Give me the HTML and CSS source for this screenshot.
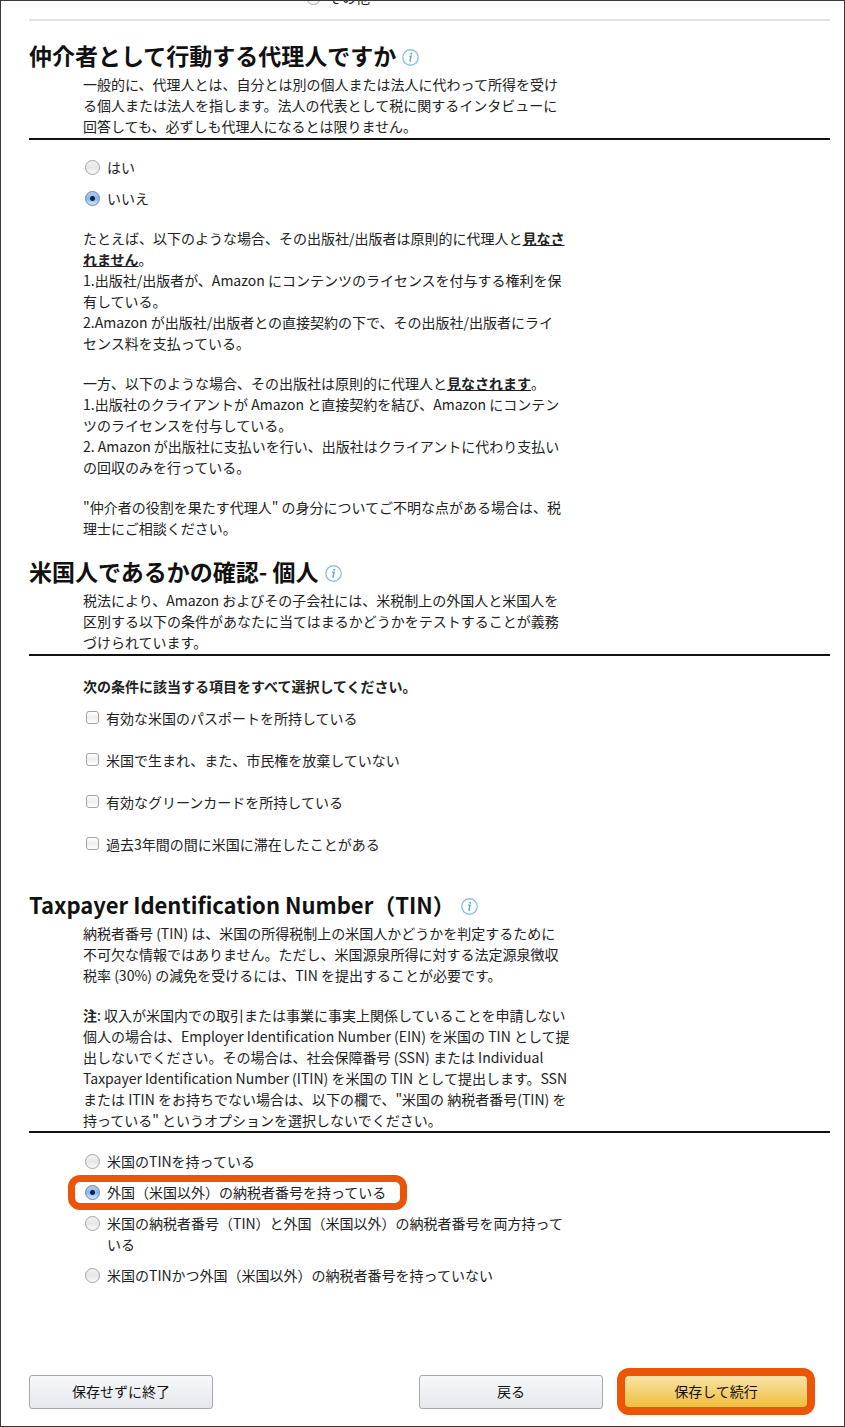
FILE: index.html
```
<!DOCTYPE html>
<html lang="ja">
<head>
<meta charset="utf-8">
<meta name="viewport" content="width=device-width, initial-scale=1">
<title>税に関するインタビュー</title>
<link rel="stylesheet" href="styles.css">
</head>
<body>
<form class="page">
  <div class="previous">
    <label class="option"><input class="radio" type="radio" name="entity"><span>その他</span></label>
  </div>

  <section class="section">
    <h2 class="title">仲介者として行動する代理人ですか
      <svg class="info" viewBox="0 0 17 17" aria-hidden="true"><circle cx="8.5" cy="8.5" r="7.7"/><path class="stem" d="M7.3 7.2H9L8 11.7Q7.9 12.4 9 12"/><circle class="dot" cx="9.3" cy="4.8" r="1"/></svg>
    </h2>
    <p class="lead">一般的に、代理人とは、自分とは別の個人または法人に代わって所得を受け<br>る個人または法人を指します。法人の代表として税に関するインタビューに<br>回答しても、必ずしも代理人になるとは限りません。</p>
    <div class="body">
      <div class="options">
        <label class="option"><input class="radio" type="radio" name="agent"><span>はい</span></label>
        <label class="option"><input class="radio" type="radio" name="agent" checked><span>いいえ</span></label>
      </div>
      <div class="notes">
        <p>たとえば、以下のような場合、その出版社/出版者は原則的に代理人と<strong class="key">見なさ<br>れません</strong>。<br>1.出版社/出版者が、Amazon にコンテンツのライセンスを付与する権利を保<br>有している。<br>2.Amazon が出版社/出版者との直接契約の下で、その出版社/出版者にライ<br>センス料を支払っている。</p>
        <p>一方、以下のような場合、その出版社は原則的に代理人と<strong class="key">見なされます</strong>。<br>1.出版社のクライアントが Amazon と直接契約を結び、Amazon にコンテン<br>ツのライセンスを付与している。<br>2. Amazon が出版社に支払いを行い、出版社はクライアントに代わり支払い<br>の回収のみを行っている。</p>
        <p>"仲介者の役割を果たす代理人" の身分についてご不明な点がある場合は、税<br>理士にご相談ください。</p>
      </div>
    </div>
  </section>

  <section class="section">
    <h2 class="title">米国人であるかの確認- 個人
      <svg class="info" viewBox="0 0 17 17" aria-hidden="true"><circle cx="8.5" cy="8.5" r="7.7"/><path class="stem" d="M7.3 7.2H9L8 11.7Q7.9 12.4 9 12"/><circle class="dot" cx="9.3" cy="4.8" r="1"/></svg>
    </h2>
    <p class="lead">税法により、Amazon およびその子会社には、米税制上の外国人と米国人を<br>区別する以下の条件があなたに当てはまるかどうかをテストすることが義務<br>づけられています。</p>
    <fieldset class="body checks">
      <legend class="question">次の条件に該当する項目をすべて選択してください。</legend>
      <label class="option"><input class="check" type="checkbox"><span>有効な米国のパスポートを所持している</span></label>
      <label class="option"><input class="check" type="checkbox"><span>米国で生まれ、また、市民権を放棄していない</span></label>
      <label class="option"><input class="check" type="checkbox"><span>有効なグリーンカードを所持している</span></label>
      <label class="option"><input class="check" type="checkbox"><span>過去3年間の間に米国に滞在したことがある</span></label>
    </fieldset>
  </section>

  <section class="section section-tin">
    <h2 class="title">Taxpayer Identification Number（TIN）
      <svg class="info" viewBox="0 0 17 17" aria-hidden="true"><circle cx="8.5" cy="8.5" r="7.7"/><path class="stem" d="M7.3 7.2H9L8 11.7Q7.9 12.4 9 12"/><circle class="dot" cx="9.3" cy="4.8" r="1"/></svg>
    </h2>
    <div class="lead notes">
      <p>納税者番号 (TIN) は、米国の所得税制上の米国人かどうかを判定するために<br>不可欠な情報ではありません。ただし、米国源泉所得に対する法定源泉徴収<br>税率 (30%) の減免を受けるには、TIN を提出することが必要です。</p>
      <p><strong>注</strong>: 収入が米国内での取引または事業に事実上関係していることを申請しない<br>個人の場合は、Employer Identification Number (EIN) を米国の TIN として提<br>出しないでください。その場合は、社会保障番号 (SSN) または Individual<br>Taxpayer Identification Number (ITIN) を米国の TIN として提出します。SSN<br>または ITIN をお持ちでない場合は、以下の欄で、"米国の 納税者番号(TIN) を<br>持っている" というオプションを選択しないでください。</p>
    </div>
    <div class="body options">
      <label class="option"><input class="radio" type="radio" name="tin"><span>米国のTINを持っている</span></label>
      <label class="option marked"><input class="radio" type="radio" name="tin" checked><span>外国（米国以外）の納税者番号を持っている</span></label>
      <label class="option"><input class="radio" type="radio" name="tin"><span>米国の納税者番号（TIN）と外国（米国以外）の納税者番号を両方持って<br>いる</span></label>
      <label class="option"><input class="radio" type="radio" name="tin"><span>米国のTINかつ外国（米国以外）の納税者番号を持っていない</span></label>
    </div>
  </section>

  <div class="actions">
    <button class="button" type="button">保存せずに終了</button>
    <button class="button back" type="button">戻る</button>
    <button class="button primary marked" type="button">保存して続行</button>
  </div>
</form>
</body>
</html>
```

FILE: styles.css
```
* {
  box-sizing: border-box;
}

body {
  margin: 0;
  background: #fff;
  color: #222;
  font-family: "Noto Sans CJK JP", sans-serif;
  font-size: 14px;
  line-height: 21px;
}

h2,
p {
  margin: 0;
}

.page {
  min-height: 100vh;
  padding: 0 14px 16px 28px;
  border: 1px solid #3a3739;
}

.previous {
  display: flex;
  align-items: flex-end;
  height: 7px;
  padding-left: 275px;
  margin-bottom: 11px;
  overflow: hidden;
}

.section {
  padding-top: 17px;
}

.previous + .section {
  padding-top: 19px;
  border-top: 2px solid #e2e2e2;
}

.section-tin {
  padding-top: 34px;
}

.title {
  display: flex;
  align-items: center;
  gap: 6px;
  margin-bottom: 4px;
  color: #111;
  font-size: 23px;
  line-height: 30px;
}

.section-tin .title {
  font-size: 22px;
}

.info {
  width: 17px;
  height: 17px;
  margin-top: 5px;
  fill: none;
  stroke: #8fc4d2;
  stroke-width: 1.4;
}

.info .stem {
  stroke: #5ba7bd;
}

.info .dot {
  fill: #5ba7bd;
  stroke: none;
}

.lead {
  padding: 0 0 1px 54px;
  border-bottom: 2px solid #111;
}

.section-tin .lead {
  padding-bottom: 0;
}

.body {
  padding: 17px 0 0 54px;
}

.notes {
  display: flex;
  flex-direction: column;
  gap: 19px;
}

.options + .notes {
  margin-top: 19px;
}

.key {
  text-decoration: underline;
}

.options {
  display: flex;
  flex-direction: column;
  align-items: flex-start;
  gap: 10px;
}

.section-tin .options {
  padding-top: 18px;
}

.option {
  display: flex;
  align-items: flex-start;
  gap: 7px;
  padding-left: 2px;
}

.checks {
  display: flex;
  flex-direction: column;
  align-items: flex-start;
  gap: 21px;
  margin: 0;
  padding-top: 11px;
  border: 0;
}

.checks .option {
  padding-left: 3px;
}

.question {
  padding: 20px 0 0;
  font-weight: bold;
}

.radio,
.check {
  flex: none;
  appearance: none;
  margin: 3px 0 0;
  border: 1px solid #a3a3a3;
  background: linear-gradient(#f4f4f4, #e6e6e6 50%, #fafafa);
}

.radio {
  width: 15px;
  height: 15px;
  border-radius: 50%;
}

.radio:checked {
  border-color: #7480a8;
  background: radial-gradient(circle, #10213f 2px, transparent 3px), linear-gradient(#b5d0f3, #83b7ee 50%, #c8ecff);
}

.check {
  width: 13px;
  height: 13px;
  border-radius: 3px;
  background: linear-gradient(#fff, #eee 50%, #fff);
}

.marked {
  position: relative;
}

.marked::after {
  position: absolute;
  inset: -7px -21px -7px -15px;
  border: 7px solid #eb5505;
  border-radius: 12px;
  content: "";
  pointer-events: none;
}

.actions {
  display: flex;
  gap: 21px;
  padding: 89px 22px 0 0;
}

.button {
  flex: 0 1 184px;
  height: 34px;
  padding: 0 0 2px;
  border: 1px solid #a5a8ad;
  border-radius: 3px;
  background: linear-gradient(#f7f8fa, #e5e8ed);
  color: #111;
  font: inherit;
}

.back {
  margin-left: auto;
}

.primary {
  border-color: #b08a30;
  background: linear-gradient(#f8e3a8, #efbd3a);
}

.primary::after {
  inset: -8px -8px -7px;
  border-width: 8px;
}
```
